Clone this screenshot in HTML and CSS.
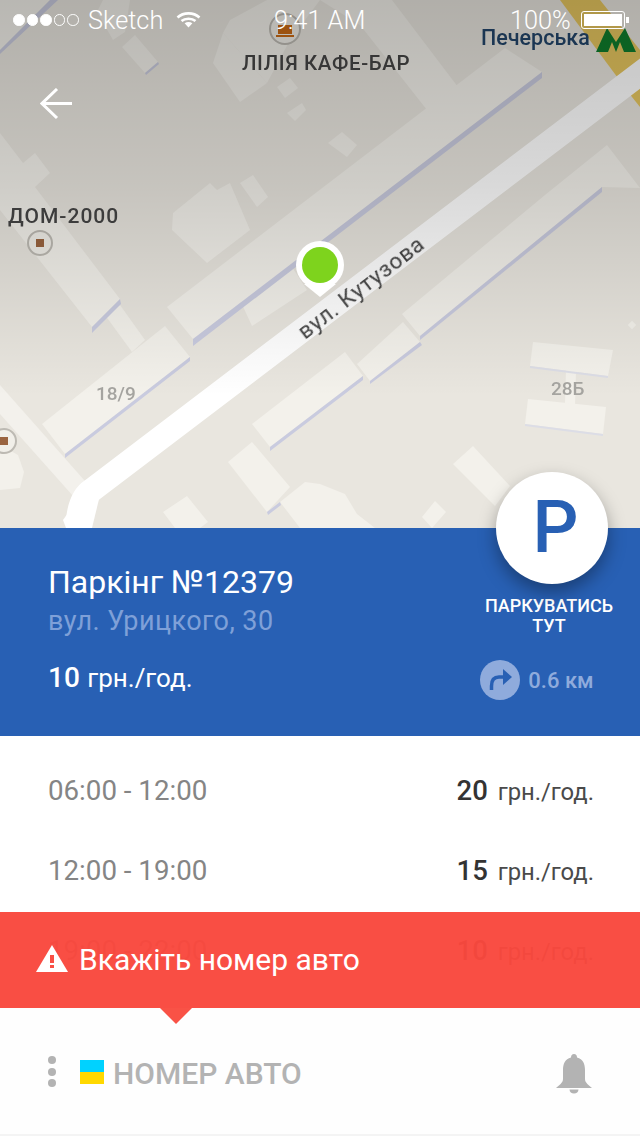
FILE: index.html
```html
<!DOCTYPE html>
<html lang="uk">
<head>
<meta charset="utf-8">
<title>Паркінг</title>
<link rel="stylesheet" href="styles.css">
</head>
<body>
<main class="screen">
  <section class="map">
    <svg class="map-canvas" viewBox="0 0 640 528" width="640" height="528">
      <defs>
        <linearGradient id="shade" x1="0" y1="0" x2="0" y2="1">
          <stop offset="0" stop-color="#000" stop-opacity=".24"/>
          <stop offset=".35" stop-color="#000" stop-opacity=".15"/>
          <stop offset=".75" stop-color="#000" stop-opacity="0"/>
        </linearGradient>
      </defs>
      <rect class="ground" width="640" height="528"/>
      <polygon class="yellow" points="560,0 600,0 640,50 640,107 632,97"/>
      <polygon class="side" points="0,385 85,481 73,496 0,414"/>
      <polygon class="bld" points="392,0 458,87 427,110 360,25 320,0"/>
      <polygon class="bld" points="213,63 240,102 267,83 223,33"/>
      <polygon class="bld" points="223,33 230,20 267,0 320,0 290,40 267,83"/>
      <polygon class="bld" points="277,87 290,78 298,88 285,98"/>
      <polygon class="bld" points="287,113 302,103 306,110 295,121"/>
      <polygon class="bld" points="122,47 135,35 158,62 145,73"/>
      <polygon class="bld" points="97,12 103,0 130,0 125,32 113,40"/>
      <polygon class="bld" points="0,0 50,0 0,50"/>
      <polygon class="bld" points="240,183 253,175 268,197 257,207"/>
      <polygon class="bld" points="328,143 342,132 357,145 347,157"/>
      <polygon class="bld" points="173,213 210,183 217,190 230,183 250,230 207,263 172,230"/>
      <polygon class="bld" points="0,133 23,163 35,153 50,173 35,187 120,299 92,327 0,210"/>
      <polygon class="bld" points="105,315 120,305 145,340 132,352"/>
      <polygon class="bld" points="167,307 505,48 542,72 193,339"/>
      <polygon class="bld" points="240,300 290,264 307,290 252,326"/>
      <polygon class="bld" points="42,424 165,326 190,357 65,454"/>
      <polygon class="bld" points="402,314 545,195 607,145 640,188 602,187 420,336"/>
      <polygon class="bld" points="357,364 403,322 420,342 370,381"/>
      <polygon class="bld" points="252,424 345,352 363,376 270,447"/>
      <polygon class="bld" points="228,462 252,442 290,487 267,512"/>
      <polygon class="bld" points="280,502 305,482 320,484 345,494 357,514 375,528 300,528"/>
      <polygon class="bld" points="163,512 187,496 208,522 200,528 175,528"/>
      <polygon class="bld" points="533,342 613,350 608,376 530,366"/>
      <polygon class="bld" points="528,399 606,407 603,434 525,424"/>
      <polygon class="bld" points="566,370 576,371 575,405 565,403"/>
      <polygon class="bld" points="453,464 473,446 510,486 495,506"/>
      <polygon class="bld" points="422,517 435,501 446,512 432,528"/>
      <polygon class="bld" points="0,445 18,455 24,472 20,488 0,490"/>
      <polygon class="shadow" points="193,339 542,72 542,78 193,346"/>
      <polygon class="shadow" points="65,454 190,357 190,361 65,458"/>
      <polygon class="shadow" points="92,327 120,299 121,304 92,333"/>
      <polygon class="shadow" points="420,336 602,187 602,192 420,340"/>
      <polygon class="shadow" points="370,381 420,342 422,345 370,384"/>
      <polygon class="shadow" points="270,447 363,376 363,380 270,451"/>
      <polygon class="shadow" points="0,50 50,0 58,0 0,54"/>
      <polygon class="shadow" points="145,73 158,62 159,64 146,75"/>
      <polygon class="shadow" points="267,512 280,502 281,505 268,515"/>
      <polygon class="shadow shadow-faint" points="530,366 608,376 608,378 530,368"/>
      <polygon class="shadow shadow-faint" points="525,424 603,434 603,436 525,426"/>
      <path class="road-line" d="M78 520 Q80 498 92 490 L650 66"/>
      <polygon class="road-end" points="63,520 75,503 100,495 92,528 66,528"/>
      <rect class="blink" x="629" y="322" width="6" height="6"/>
      <circle class="poi" cx="285" cy="29" r="15"/>
      <rect class="poi-cup" x="278" y="25" width="14" height="9"/>
      <rect class="poi-cup" x="276" y="35" width="18" height="2"/>
      <circle class="poi" cx="40" cy="243" r="12"/>
      <rect class="poi-home" x="36" y="239" width="8" height="8"/>
      <circle class="poi" cx="4" cy="441" r="12"/>
      <rect class="poi-home" x="0" y="437" width="8" height="8"/>
      <text class="label" x="242" y="70">ЛІЛІЯ КАФЕ-БАР</text>
      <text class="label label-wide" x="8" y="223">ДОМ-2000</text>
      <text class="label-metro" x="481" y="45">Печерська</text>
      <text class="label-house" x="96" y="400">18/9</text>
      <text class="label-house" x="551" y="395">28Б</text>
      <text class="label-street" transform="translate(305 340) rotate(-37.500)">вул. Кутузова</text>
      <polygon class="metro" points="596,52 607,28 616,42 625,28 636,52 624,52 620,42 616,52 612,42 608,52"/>
      <rect width="640" height="528" fill="url(#shade)"/>
      <path class="pin-tail" d="M304 284 L320 297 L336 284 Z"/>
      <circle class="pin-ring" cx="320" cy="265" r="24"/>
      <circle class="pin-dot" cx="320" cy="265" r="18"/>
    </svg>
    <div class="status">
      <div class="status-left">
        <span class="signal"><i class="on"></i><i class="on"></i><i class="on"></i><i></i><i></i></span>
        <span class="carrier">Sketch</span>
        <svg class="wifi" width="25" height="16" viewBox="0 0 25 16"><path class="wifi-arc" d="M1.500 5.500 C7.500 0 17.500 0 23.500 5.500"/><path class="wifi-arc" d="M5.500 9 C9 6 16 6 19.500 9"/><path class="wifi-tip" d="M8.600 11.300 C11 9.600 14 9.600 16.400 11.300 L12.500 15.500 Z"/></svg>
      </div>
      <span class="time">9:41 AM</span>
      <div class="status-right">
        <span class="percent">100%</span>
        <span class="battery"><b></b></span>
        <span class="nub"></span>
      </div>
    </div>
    <svg class="back" width="32" height="32" viewBox="0 0 32 32"><path d="M32 15.500 H3 M17 1 L2 15.500 L17 30"/></svg>
  </section>

  <section class="info">
    <div class="info-main">
      <h1>Паркінг №12379</h1>
      <p class="address">вул. Урицкого, 30</p>
      <p class="price"><b>10</b> грн./год.</p>
    </div>
    <div class="info-side">
      <p class="park-label">ПАРКУВАТИСЬ<br>ТУТ</p>
      <div class="distance">
        <svg width="40" height="40" viewBox="0 0 40 40"><circle class="dir-bg" cx="20" cy="20" r="20"/><path class="dir-stem" d="M11.500 30 V26 Q11.500 17 19 17 H24"/><polygon class="dir-head" points="23,9 32,17 23,25"/></svg>
        <span>0.6 км</span>
      </div>
    </div>
    <button class="fab">P</button>
  </section>

  <section class="lower">
    <ul class="schedule">
      <li><span class="hours">06:00 - 12:00</span><span class="rate"><b>20</b> грн./год.</span></li>
      <li><span class="hours">12:00 - 19:00</span><span class="rate"><b>15</b> грн./год.</span></li>
      <li><span class="hours">19:00 - 22:00</span><span class="rate"><b>10</b> грн./год.</span></li>
    </ul>
    <div class="alert">
      <svg width="32" height="28" viewBox="0 0 32 28"><polygon class="warn-bg" points="16,0 32,27 0,27"/><rect class="warn-mark" x="14" y="10" width="4" height="8"/><rect class="warn-mark" x="14" y="20" width="4" height="3"/></svg>
      <span>Вкажіть номер авто</span>
      <i class="alert-tail"></i>
    </div>
    <footer class="plate">
      <span class="more"><i></i><i></i><i></i></span>
      <span class="flag"></span>
      <span class="plate-text">НОМЕР АВТО</span>
      <svg class="bell" width="36" height="40" viewBox="0 0 36 40"><path d="M18 0 C20 0 21 1.500 21 3.500 C27 5 29 10 29 16 V25 C29 29 33 31 36 34 H0 C3 31 7 29 7 25 V16 C7 10 9 5 15 3.500 C15 1.500 16 0 18 0 Z"/><path d="M13.500 35.500 H22.500 C22.500 38 20.500 39.500 18 39.500 C15.500 39.500 13.500 38 13.500 35.500 Z"/></svg>
    </footer>
  </section>
</main>
</body>
</html>
```
FILE: styles.css
```css
* { box-sizing: border-box; }
html, body { margin: 0; padding: 0; }
body { background: #fff; font-family: Roboto, "Noto Sans", sans-serif; }
.screen { width: 640px; height: 1136px; overflow: hidden; display: flex; flex-direction: column; }

/* map */
.map { position: relative; height: 528px; flex: none; }
.map-canvas { position: absolute; inset: 0; display: block; }
.ground { fill: #e9e6df; }
.yellow { fill: #e6c65f; }
.side { fill: #f3f1ec; }
.bld { fill: #f3f1eb; }
.shadow { fill: #c9cbdf; }
.shadow-faint { fill: #dcdde6; }
.road-line { fill: none; stroke: #fff; stroke-width: 24; stroke-linejoin: round; }
.road-end { fill: #fff; }
.blink { fill: #f3f1eb; transform-box: fill-box; transform-origin: center; transform: rotate(45deg); }
.poi { fill: #f1efe9; stroke: #bdbab3; stroke-width: 2; }
.poi-cup { fill: #c96a16; }
.poi-home { fill: #9a6440; }
.label { font: 500 20.500px Roboto, sans-serif; letter-spacing: .6px; fill: #454545; filter: blur(.4px); }
.label-wide { font-size: 21px; letter-spacing: 1px; }
.label-metro { font: 500 21.500px Roboto, sans-serif; fill: #23456a; filter: blur(.3px); }
.label-house { font: 500 19px Roboto, sans-serif; fill: #a5a4a0; filter: blur(.6px); }
.label-street { font: 400 22.500px Roboto, sans-serif; fill: #464646; letter-spacing: .75px; filter: blur(.3px); }
.metro { fill: #0f7d2c; }
.pin-ring, .pin-tail { fill: #fff; }
.pin-dot { fill: #7ed31d; }

.status { position: relative; display: flex; align-items: center; justify-content: space-between; height: 40px; color: #fff; font-weight: 300; font-size: 25.300px; }
.status-left { display: flex; align-items: center; padding-left: 13px; width: 274px; }
.signal { display: flex; gap: 2px; width: 75px; }
.signal i { width: 11.500px; height: 11.500px; border-radius: 50%; border: 1px solid #fff; }
.signal i.on { background: #fff; }
.carrier { width: 88px; }
.wifi { display: block; }
.wifi-arc { fill: none; stroke: #fff; stroke-width: 2.600; }
.wifi-tip { fill: #fff; }
.time { width: 236px; }
.status-right { display: flex; align-items: center; width: 130px; }
.percent { width: 71px; }
.battery { width: 44px; height: 18px; border: 1.500px solid #fff; border-radius: 3px; padding: 2px; display: block; }
.battery b { display: block; height: 100%; background: #fff; }
.nub { width: 3px; height: 6px; background: #fff; margin-left: 1px; }
.back { position: absolute; left: 40px; top: 88px; }
.back path { fill: none; stroke: #fff; stroke-width: 3; }

/* info */
.info { position: relative; height: 208px; flex: none; background: #2860b4; display: flex; justify-content: space-between; color: #fff; }
.info-main { padding: 36px 0 0 48px; }
.info h1 { margin: 0; font-size: 32px; line-height: 36px; font-weight: 400; letter-spacing: 0; }
.address { margin: 3px 0 0; font-size: 27px; line-height: 36px; color: #7fa0d8; letter-spacing: .45px; }
.price { margin: 21px 0 0; font-size: 26px; line-height: 36px; }
.price b { font-size: 28px; font-weight: 500; margin-right: 1px; }
.info-side { width: 180px; padding-top: 68px; display: flex; flex-direction: column; align-items: center; margin-right: 1px; }
.park-label { margin: 0; font-size: 18px; line-height: 20px; font-weight: 500; text-align: center; }
.distance { display: flex; align-items: center; gap: 8px; margin-top: 24px; margin-right: 24px; color: #8fabdc; font-size: 22px; font-weight: 500; }
.distance svg { display: block; }
.dir-bg { fill: #8fabdc; }
.dir-stem { fill: none; stroke: #2860b4; stroke-width: 3.500; }
.dir-head { fill: #2860b4; }
.fab { position: absolute; right: 32px; top: -56px; width: 112px; height: 112px; border: 0; padding: 0 0 0 7px; border-radius: 50%; background: #fff; color: #2860b4; font: 500 72px/112px Roboto, sans-serif; box-shadow: 0 8px 18px rgba(0,0,0,.35); }

/* lower */
.lower { position: relative; flex: 1; display: flex; flex-direction: column; background: #fff; }
.schedule { list-style: none; margin: 0; padding: 14px 46px 0 48px; flex: 1; overflow: hidden; }
.schedule li { height: 80px; display: flex; align-items: center; justify-content: space-between; }
.hours { font-size: 27.700px; color: #858585; }
.rate { font-size: 23.800px; color: #4a4a4a; }
.rate b { font-size: 27.500px; font-weight: 500; color: #333; margin-right: 4px; }

.alert { position: absolute; left: 0; right: 0; bottom: 128px; height: 96px; background: rgba(249,72,62,.97); display: flex; align-items: center; gap: 11px; padding: 0 0 2px 36px; color: #fff; font-size: 30px; }
.alert svg { display: block; }
.warn-bg { fill: #fff; }
.warn-mark { fill: #f94f45; }
.alert-tail { position: absolute; left: 160px; top: 96px; width: 0; height: 0; border-left: 16px solid transparent; border-right: 16px solid transparent; border-top: 16px solid #f95246; }

.plate { height: 128px; flex: none; display: flex; align-items: flex-start; padding: 46px 0 0 48px; border-bottom: 2px solid #f4f4f4; background: #fefefe; color: #b3b3b3; }
.more { display: flex; flex-direction: column; gap: 3.500px; width: 32px; padding-top: 2px; }
.more i { width: 8px; height: 8px; border-radius: 50%; background: #b3b3b3; }
.flag { width: 24px; height: 24px; margin-top: 6px; background: linear-gradient(#00d2ff 50%, #ffd800 50%); }
.plate-text { margin-left: 9px; font-size: 30px; line-height: 40px; font-weight: 500; }
.bell { margin-left: auto; margin-right: 48px; display: block; fill: #b3b3b3; }
```
